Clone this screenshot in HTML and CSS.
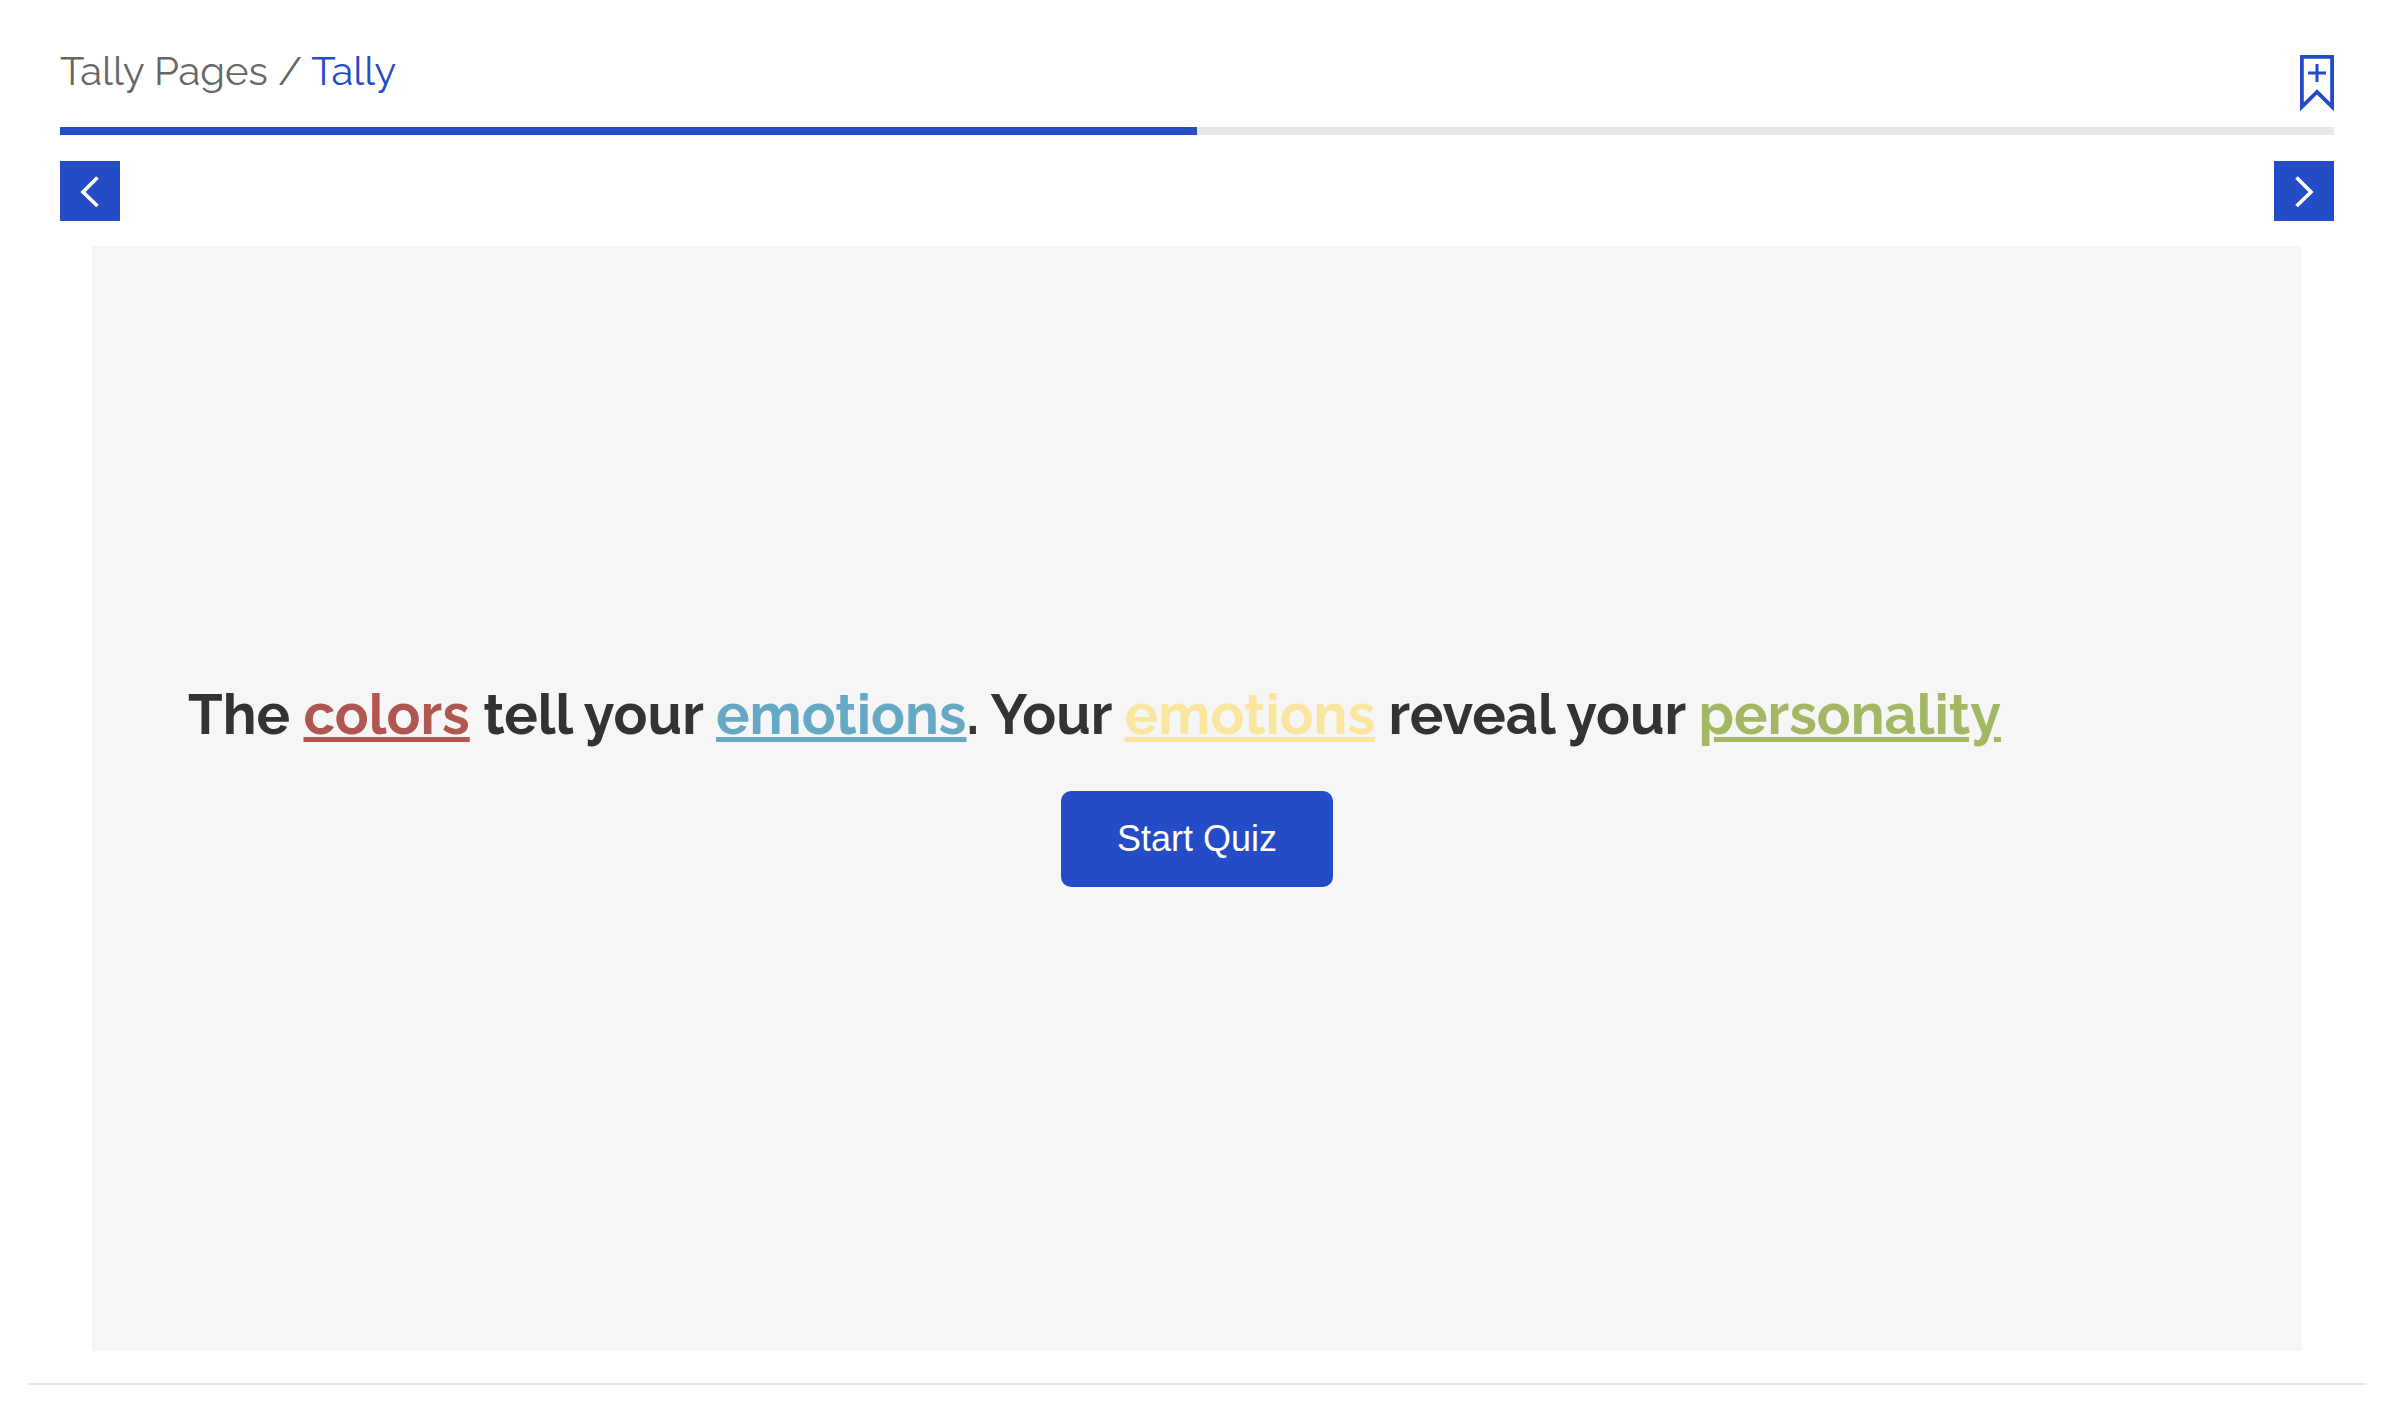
FILE: index.html
```
<!DOCTYPE html>
<html lang="en">
<head>
    <meta charset="UTF-8">
    <meta name="viewport" content="width=device-width, initial-scale=1.0">
    <title>Tally Pages / Tally</title>
    <link rel="stylesheet" href="styles.css">
</head>
<body>
    <div class="page">
        <header class="header">
            <nav class="breadcrumb" aria-label="Breadcrumb">
                <a href="#">Tally Pages</a> / <a href="#" class="current">Tally</a>
            </nav>
            <button class="bookmark" aria-label="Add bookmark">
                <svg width="34" height="56" viewBox="0 0 34 56" fill="none" stroke="currentColor">
                    <path d="M1.9 1.9H32.1V51.8L17 37L1.9 51.8Z" stroke-width="3.8"/>
                    <path d="M17 9V27M8 18H26" stroke-width="3"/>
                </svg>
            </button>
        </header>

        <div class="progress" role="progressbar" aria-label="Progress" aria-valuenow="50" aria-valuemin="0" aria-valuemax="100">
            <div class="progress-bar" style="width: 50%"></div>
        </div>

        <div class="pager">
            <button class="nav-btn" aria-label="Previous page">
                <svg width="60" height="60" viewBox="0 0 60 60" fill="none" stroke="currentColor" stroke-width="3.7">
                    <path d="M37.5 16.5L23 31L37.5 45"/>
                </svg>
            </button>
            <button class="nav-btn" aria-label="Next page">
                <svg width="60" height="60" viewBox="0 0 60 60" fill="none" stroke="currentColor" stroke-width="3.7">
                    <path d="M22.5 16.5L37 31L22.5 45"/>
                </svg>
            </button>
        </div>

        <main class="stage">
            <h1>The <u class="red">colors</u> tell your <u class="blue">emotions</u>. Your <u class="yellow">emotions</u> reveal your <u class="green">personality</u></h1>
            <button class="start-btn">Start Quiz</button>
        </main>
    </div>
    <hr class="divider">
</body>
</html>
```
FILE: styles.css
```
* { box-sizing: border-box; }
body { margin: 0; background-color: #fff; color: #333; font-family: Raleway, Lato, sans-serif; }
button { border: none; padding: 0; cursor: pointer; }
svg { display: block; }

.page { padding: 47px 52px 0 60px; }

/* header */
.header { display: flex; justify-content: space-between; align-items: flex-start; height: 80px; }
.breadcrumb { font-size: 40px; line-height: 48px; color: #666; }
.breadcrumb a { color: inherit; text-decoration: none; }
.breadcrumb .current { color: #234cc6; }
.bookmark { margin-top: 8px; background: none; color: #234cc6; }

.progress { height: 8px; background-color: #e8e8e8; }
.progress-bar { height: 100%; background-color: #234cc6; }

.pager { display: flex; justify-content: space-between; margin: 26px 0 25px; }
.nav-btn { background-color: #234cc6; color: #fff; }

/* slide */
.stage { display: flex; flex-direction: column; justify-content: center; align-items: center; aspect-ratio: 2 / 1; margin: 0 32px; padding: 0 96px 30px; background-color: #f6f6f6; }
.stage h1 { align-self: stretch; margin: 0 0 44px; font-size: 56px; line-height: 66px; font-weight: 700; }
.stage u { text-decoration-thickness: 5px; text-underline-offset: 3px; }
.red { color: #b15751; }
.blue { color: #65a9c4; }
.yellow { color: #fae69e; }
.green { color: #a3b865; }
.start-btn { padding: 0 56px; border-radius: 10px; background-color: #234cc6; color: #fff; font: 36px/96px "Liberation Sans", Arial, sans-serif; }

.divider { height: 2px; margin: 32px 20px 25px 28px; border: none; background-color: #e8e8e8; }
```
